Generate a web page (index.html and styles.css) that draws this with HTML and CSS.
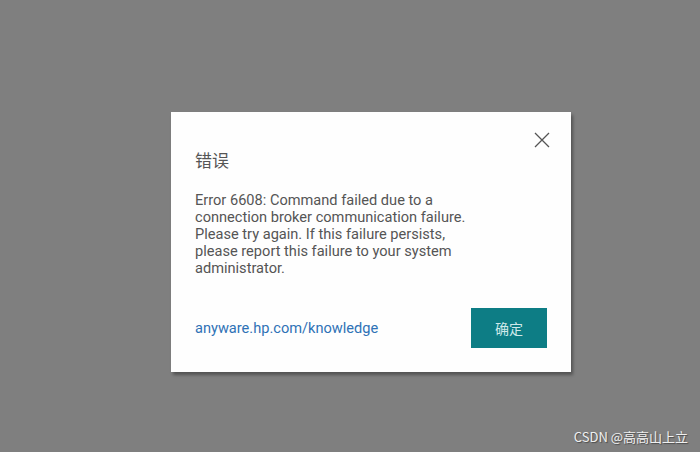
FILE: index.html
```html
<!DOCTYPE html>
<html>
<head>
<meta charset="utf-8">
<link rel="stylesheet" href="styles.css">
</head>
<body>
<div class="dialog">
  <div class="close-row">
    <svg class="close" width="16" height="16" viewBox="0 0 16 16"><path d="M1 1L15 15M15 1L1 15" stroke="#555" stroke-width="1.3" fill="none"/></svg>
  </div>
  <div class="title">错误</div>
  <div class="message">Error 6608: Command failed due to a connection broker communication failure. Please try again. If this failure persists, please report this failure to your system administrator.</div>
  <div class="footer">
    <a class="link">anyware.hp.com/knowledge</a>
    <button class="ok">确定</button>
  </div>
</div>
<div class="watermark">CSDN @高高山上立</div>
</body>
</html>
```
FILE: styles.css
```css
html, body { margin: 0; height: 100%; }
body {
  background: #7f7f7f;
  padding: 112px 0 0 171px;
  box-sizing: border-box;
  font-family: Roboto, "Noto Sans CJK SC", sans-serif;
  position: relative;
  overflow: hidden;
}
.dialog {
  width: 400px;
  height: 260px;
  background: #fefefe;
  box-sizing: border-box;
  padding: 20px 24px 0 24px;
  box-shadow: 2px 3px 3px rgba(0,0,0,0.35);
}
.close-row { display: flex; justify-content: flex-end; margin-right: -3px; height: 16px; }
.close { display: block; }
.title {
  margin-top: 3px;
  font-size: 17px;
  line-height: 20px;
  color: #555;
}
.message {
  margin-top: 21px;
  font-size: 14.6px;
  line-height: 17px;
  color: #555;
  width: 278px;
}
.footer {
  margin-top: 31px;
  display: flex;
  justify-content: space-between;
  align-items: center;
}
.link { color: #2f72b6; font-size: 14.6px; }
.ok {
  width: 76px;
  height: 40px;
  background: #0d7d85;
  border: none;
  color: #cfe9ea;
  font-size: 14px;
  font-family: "Noto Sans CJK SC", sans-serif;
  padding: 0;
}
.watermark {
  position: absolute;
  right: 12px;
  bottom: 6px;
  font-size: 13px;
  color: #f0f0f0;
  text-shadow: 1px 1px 1px rgba(0,0,0,0.4);
  font-family: "Noto Sans CJK SC", sans-serif;
}
```
